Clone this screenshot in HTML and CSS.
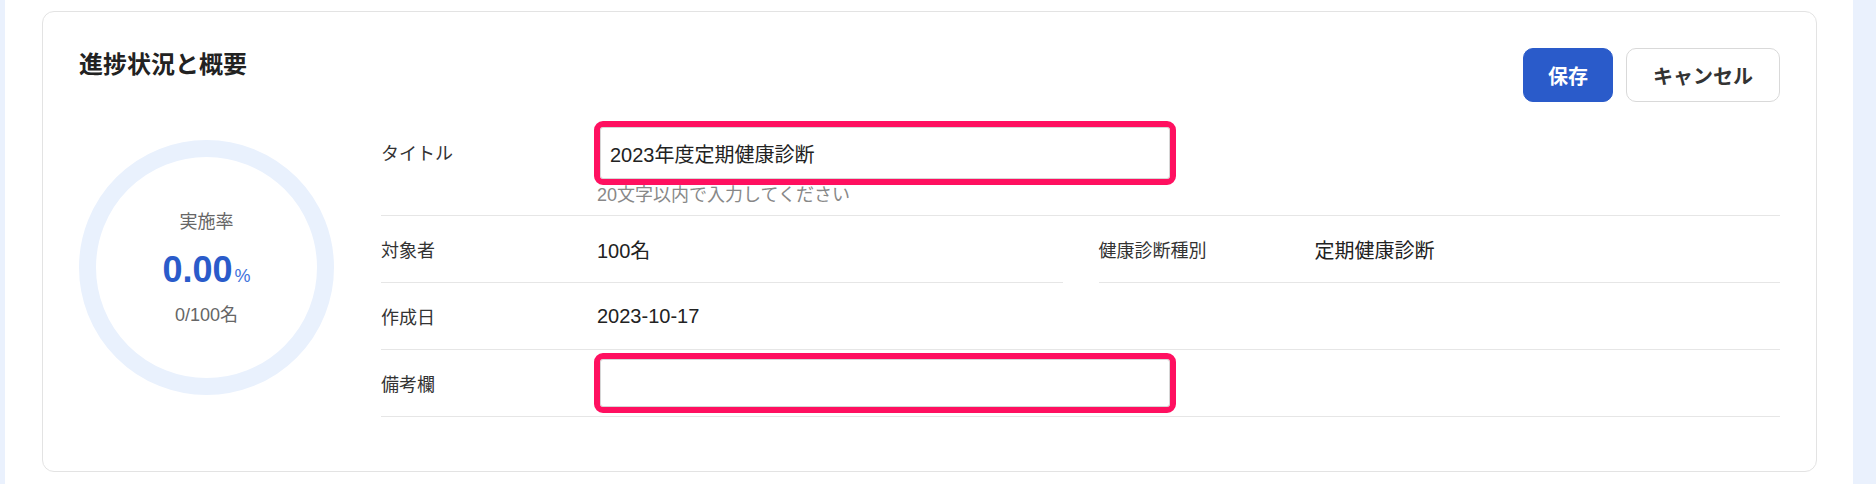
FILE: index.html
```html
<!DOCTYPE html>
<html lang="ja">
<head>
<meta charset="UTF-8">
<meta name="viewport" content="width=device-width, initial-scale=1.0">
<title>進捗状況と概要</title>
<link rel="stylesheet" href="styles.css">
</head>
<body>
    <div class="page">
        <div class="side-edge"></div>
        <div class="main">
            <div class="card">
                <div class="card-head">
                    <h2 class="card-title">進捗状況と概要</h2>
                    <div class="actions">
                        <button class="btn btn-save">保存</button>
                        <button class="btn btn-cancel">キャンセル</button>
                    </div>
                </div>
                <div class="card-body">
                    <!-- 実施率 -->
                    <div class="rate">
                        <div class="rate-label">実施率</div>
                        <div class="rate-value">0.00<span class="rate-unit">%</span></div>
                        <div class="rate-count">0/100名</div>
                    </div>
                    <div class="info">
                        <div class="row row-full row-title">
                            <div class="label label-input">タイトル</div>
                            <div class="value">
                                <input class="field field-title" type="text" value="2023年度定期健康診断">
                                <div class="hint">20文字以内で入力してください</div>
                            </div>
                        </div>
                        <div class="row">
                            <div class="label">対象者</div>
                            <div class="value">100名</div>
                        </div>
                        <div class="row">
                            <div class="label">健康診断種別</div>
                            <div class="value">定期健康診断</div>
                        </div>
                        <div class="row row-full">
                            <div class="label">作成日</div>
                            <div class="value">2023-10-17</div>
                        </div>
                        <div class="row row-full">
                            <div class="label">備考欄</div>
                            <div class="value">
                                <input class="field field-note" type="text" value="">
                            </div>
                        </div>
                    </div>
                </div>
            </div>
        </div>
        <div class="side-right"></div>
    </div>
</body>
</html>
```

FILE: styles.css
```css
body{
    margin:0;
    background:#fff;
    font-family:"Liberation Sans", "Noto Sans CJK JP", sans-serif;
    color:#222;
}
.page{
    display:flex;
    width:1876px;
    height:484px;
    overflow:hidden;
}
.side-edge{
    width:5px;
    background:#eaf1fd;
}
.side-right{
    width:23px;
    background:#eaf1fd;
}
.main{
    flex:1;
    padding:11px 36px 0 37px;
}
.card{
    border:1px solid #e3e3e3;
    border-radius:12px;
    padding:36px 36px 54px 36px;
}

/* header */
.card-head{
    display:flex;
    justify-content:space-between;
    align-items:flex-start;
}
.card-title{
    margin:0;
    font-size:24px;
    line-height:34px;
    font-weight:700;
    color:#222;
}
.actions{
    display:flex;
    gap:13px;
}
.btn{
    height:54px;
    border-radius:10px;
    font-family:inherit;
    font-size:20px;
    font-weight:700;
    cursor:pointer;
}
.btn-save{
    background:#2a5bca;
    border:1px solid #2a5bca;
    color:#fff;
    padding:0 24px;
}
.btn-cancel{
    background:#fff;
    border:1px solid #d9d9d9;
    color:#333;
    padding:0 26px;
}

/* body */
.card-body{
    display:flex;
    align-items:center;
    gap:47px;
    margin-top:16px;
}
.rate{
    width:255px;
    height:255px;
    box-sizing:border-box;
    border:17px solid #e9f1fd;
    border-radius:50%;
    display:flex;
    flex-direction:column;
    align-items:center;
    justify-content:flex-start;
    padding-top:53px;
}
.rate-label{
    font-size:18px;
    line-height:24px;
    color:#666;
}
.rate-value{
    font-size:36px;
    line-height:44px;
    font-weight:700;
    color:#2a5bca;
    margin-top:14px;
}
.rate-unit{
    font-size:18px;
    font-weight:400;
    color:#3f72dc;
    margin-left:2px;
}
.rate-count{
    font-size:18px;
    line-height:24px;
    color:#666;
    margin-top:5px;
}

.info{
    flex:1;
    display:grid;
    grid-template-columns:1fr 1fr;
    column-gap:36px;
}
.row{
    display:flex;
    align-items:center;
    min-height:66px;
    border-bottom:1px solid #e6e6e6;
}
.row-full{
    grid-column:1 / 3;
}
.row-title{
    align-items:flex-start;
    padding:9px 0 10px;
}
.label{
    width:216px;
    flex-shrink:0;
    font-size:18px;
    color:#333;
}
.label-input{
    line-height:54px;
}
.value{
    font-size:20px;
    color:#222;
}
.field{
    display:block;
    width:570px;
    box-sizing:border-box;
    margin-left:3px;
    border:1px solid #d6d6d6;
    border-radius:3px;
    outline:6px solid #ff1060;
    padding:0 9px;
    font-family:inherit;
    font-size:20px;
    color:#222;
    background:#fff;
}
.field-title{
    height:52px;
}
.field-note{
    height:48px;
}
.hint{
    margin-top:6px;
    font-size:18px;
    line-height:20px;
    color:#888;
}
```
